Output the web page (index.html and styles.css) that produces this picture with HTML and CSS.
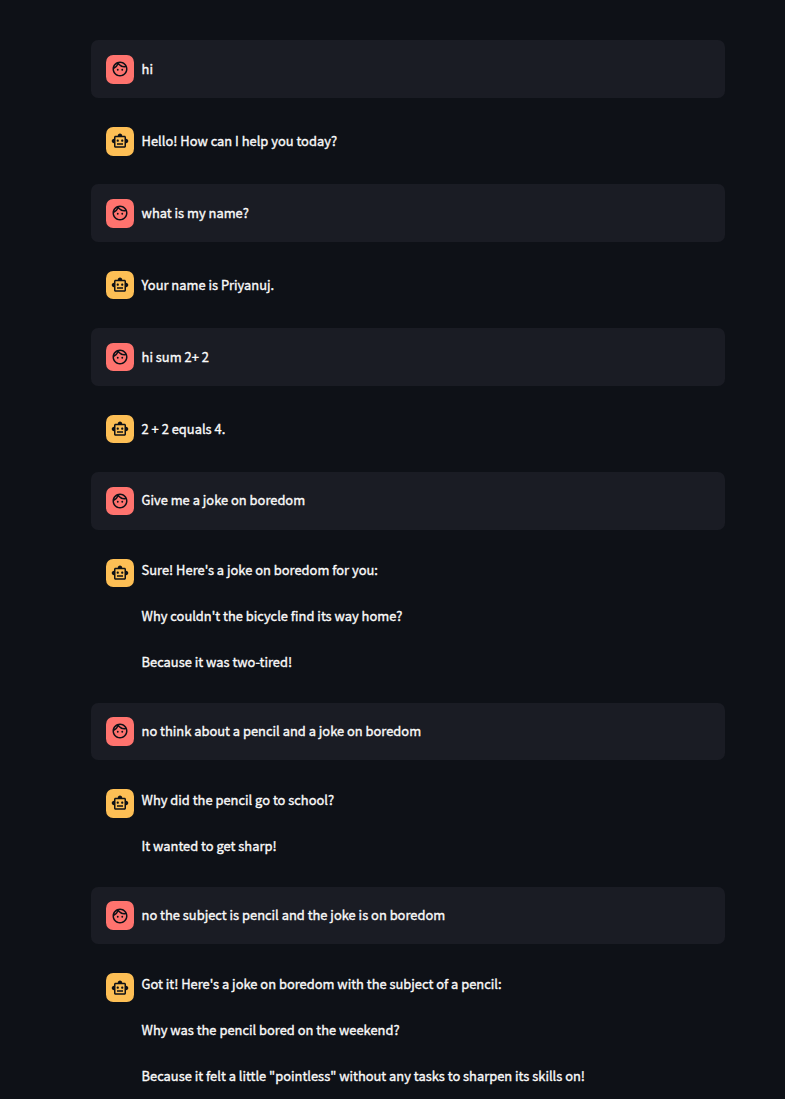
FILE: index.html
```html
<!DOCTYPE html>
<html lang="en">
<head>
<meta charset="utf-8">
<title>Chat</title>
<link rel="stylesheet" href="styles.css">
</head>
<body>
<svg class="sprite" aria-hidden="true">
<symbol id="face" viewBox="0 0 24 24"><path fill-rule="evenodd" d="M10.25 13a1.25 1.25 0 1 1-2.5 0 1.25 1.25 0 0 1 2.5 0zM15 11.75a1.25 1.25 0 1 0 0 2.5 1.25 1.25 0 0 0 0-2.5zM22 12c0 5.52-4.48 10-10 10S2 17.52 2 12 6.48 2 12 2s10 4.48 10 10zM10.66 4.12C12.06 6.44 14.6 8 17.5 8c.46 0 .91-.05 1.34-.12C17.44 5.56 14.9 4 12 4c-.46 0-.91.05-1.34.12zM4.42 9.47a8.046 8.046 0 0 0 3.66-4.44A8.046 8.046 0 0 0 4.42 9.47zM20 12c0-.78-.12-1.53-.33-2.24-.7.15-1.42.24-2.17.24a10 10 0 0 1-7.76-3.69A10.016 10.016 0 0 1 4 11.86c.01.04 0 .09 0 .14 0 4.41 3.59 8 8 8s8-3.59 8-8z"/></symbol>
<symbol id="robot" viewBox="0 0 24 24"><path fill-rule="evenodd" d="M20 9V7c0-1.1-.9-2-2-2h-3c0-1.66-1.34-3-3-3S9 3.34 9 5H6c-1.1 0-2 .9-2 2v2c-1.66 0-3 1.34-3 3s1.34 3 3 3v4c0 1.1.9 2 2 2h12c1.1 0 2-.9 2-2v-4c1.66 0 3-1.34 3-3s-1.34-3-3-3zm-2 10H6V7h12v12zm-9-6c-.83 0-1.5-.67-1.5-1.5S8.17 10 9 10s1.5.67 1.5 1.5S9.83 13 9 13zm7.5-1.5c0 .83-.67 1.5-1.5 1.5s-1.5-.67-1.5-1.5.67-1.5 1.5-1.5 1.5.67 1.5 1.5zM8 15h8v2H8v-2z"/></symbol>
</svg>
<main class="chat">
<div class="message user"><span class="avatar"><svg><use href="#face"/></svg></span><div class="content"><p>hi</p></div></div>
<div class="message bot"><span class="avatar"><svg><use href="#robot"/></svg></span><div class="content"><p>Hello! How can I help you today?</p></div></div>
<div class="message user"><span class="avatar"><svg><use href="#face"/></svg></span><div class="content"><p>what is my name?</p></div></div>
<div class="message bot"><span class="avatar"><svg><use href="#robot"/></svg></span><div class="content"><p>Your name is Priyanuj.</p></div></div>
<div class="message user"><span class="avatar"><svg><use href="#face"/></svg></span><div class="content"><p>hi sum 2+ 2</p></div></div>
<div class="message bot"><span class="avatar"><svg><use href="#robot"/></svg></span><div class="content"><p>2 + 2 equals 4.</p></div></div>
<div class="message user"><span class="avatar"><svg><use href="#face"/></svg></span><div class="content"><p>Give me a joke on boredom</p></div></div>
<div class="message bot"><span class="avatar"><svg><use href="#robot"/></svg></span><div class="content"><p>Sure! Here's a joke on boredom for you:</p><p>Why couldn't the bicycle find its way home?</p><p>Because it was two-tired!</p></div></div>
<div class="message user"><span class="avatar"><svg><use href="#face"/></svg></span><div class="content"><p>no think about a pencil and a joke on boredom</p></div></div>
<div class="message bot"><span class="avatar"><svg><use href="#robot"/></svg></span><div class="content"><p>Why did the pencil go to school?</p><p>It wanted to get sharp!</p></div></div>
<div class="message user"><span class="avatar"><svg><use href="#face"/></svg></span><div class="content"><p>no the subject is pencil and the joke is on boredom</p></div></div>
<div class="message bot"><span class="avatar"><svg><use href="#robot"/></svg></span><div class="content"><p>Got it! Here's a joke on boredom with the subject of a pencil:</p><p>Why was the pencil bored on the weekend?</p><p>Because it felt a little "pointless" without any tasks to sharpen its skills on!</p></div></div>
</main>
</body>
</html>
```
FILE: styles.css
```css
html {
  background: #0e1117;
  overflow: hidden;
}

body {
  margin: 0;
  color: #fafafa;
  font-family: "Noto Sans CJK SC", sans-serif;
  font-size: 12.9px;
  font-weight: 400;
  line-height: 23.04px;
  -webkit-text-stroke: 0.35px #fafafa;
}

.sprite {
  display: none;
}

.chat {
  display: flex;
  flex-direction: column;
  gap: 14.4px;
  width: 633.6px;
  padding: 40.4px 0 0 91.2px;
}

.message {
  display: flex;
  align-items: flex-start;
  gap: 7.2px;
  padding: 14.4px;
  border-radius: 7.2px;
}

.user {
  background: #1a1c24;
}

.avatar {
  display: flex;
  flex: none;
  align-items: center;
  justify-content: center;
  width: 28.8px;
  height: 28.8px;
  border-radius: 7.2px;
  color: #0e1117;
}

.user .avatar {
  background: #ff736e;
}

.bot .avatar {
  background: #fdbf55;
}

.avatar svg {
  width: 18px;
  height: 18px;
  fill: currentColor;
}

.content {
  display: flex;
  flex-direction: column;
  justify-content: center;
  gap: 23.04px;
  min-height: 28.8px;
  margin: -1px 0 1px;
}

.content p {
  margin: 0;
  white-space: nowrap;
}
```
